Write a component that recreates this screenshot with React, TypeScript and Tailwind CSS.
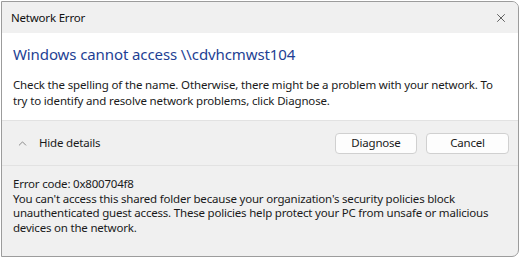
import { X, ChevronUp } from 'lucide-react'

const font = { fontFamily: '"Noto Sans", "Open Sans", sans-serif' }

export default function App() {
  return (
    <div className="w-[522px] h-[260px] bg-white overflow-hidden" style={font}>
      <div className="ml-px mt-px w-[518px] h-[256px] flex flex-col border border-[#9c9c9c] rounded-r-[7px] overflow-hidden bg-[#f0f0f0]">
        {/* Title bar */}
        <div className="h-[31px] flex items-center justify-between bg-[#f0f0f0] pl-[9px] pr-[8px] shrink-0">
          <span className="text-[11.5px] tracking-[-0.2px] text-[#111]">Network Error</span>
          <X size={14} strokeWidth={1.2} className="text-[#222] mr-[2px]" />
        </div>

        {/* Main message */}
        <div className="bg-white pl-[11px] pr-[20px] pt-[10px] pb-[11px] shrink-0">
          <h1 className="text-[15px] leading-[22px] tracking-[-0.1px] text-[#1e3f94]">Windows cannot access \\cdvhcmwst104</h1>
          <p className="mt-[12px] text-[11.5px] leading-[16px] tracking-[-0.15px] text-[#1a1a1a]">
            Check the spelling of the name. Otherwise, there might be a problem with your network. To try to identify and resolve network problems, click Diagnose.
          </p>
        </div>

        {/* Footer buttons */}
        <div className="h-[46px] flex items-center justify-between pl-[14px] pr-[9px] border-t border-[#e2e2e2] border-b shrink-0">
          <div className="flex items-center gap-[10px]">
            <ChevronUp size={13} strokeWidth={1.2} className="text-[#555]" />
            <span className="text-[11.5px] tracking-[-0.2px] text-[#1a1a1a]">Hide details</span>
          </div>
          <div className="flex gap-[9px]">
            <button className="w-[82px] h-[21px] bg-[#fdfdfd] border border-[#d0d0d0] rounded-[4px] text-[11.5px] tracking-[-0.2px] text-[#1a1a1a]">
              Diagnose
            </button>
            <button className="w-[83px] h-[21px] bg-[#fdfdfd] border border-[#d0d0d0] rounded-[4px] text-[11.5px] tracking-[-0.2px] text-[#1a1a1a]">
              Cancel
            </button>
          </div>
        </div>

        {/* Details */}
        <div className="px-[11px] pt-[11px] text-[11.5px] leading-[14.7px] tracking-[-0.2px] text-[#1a1a1a]">
          <p>Error code: 0x800704f8</p>
          <p>
            You can't access this shared folder because your organization's security policies block unauthenticated guest access. These policies help protect your PC from unsafe or malicious devices on the network.
          </p>
        </div>
      </div>
    </div>
  )
}
